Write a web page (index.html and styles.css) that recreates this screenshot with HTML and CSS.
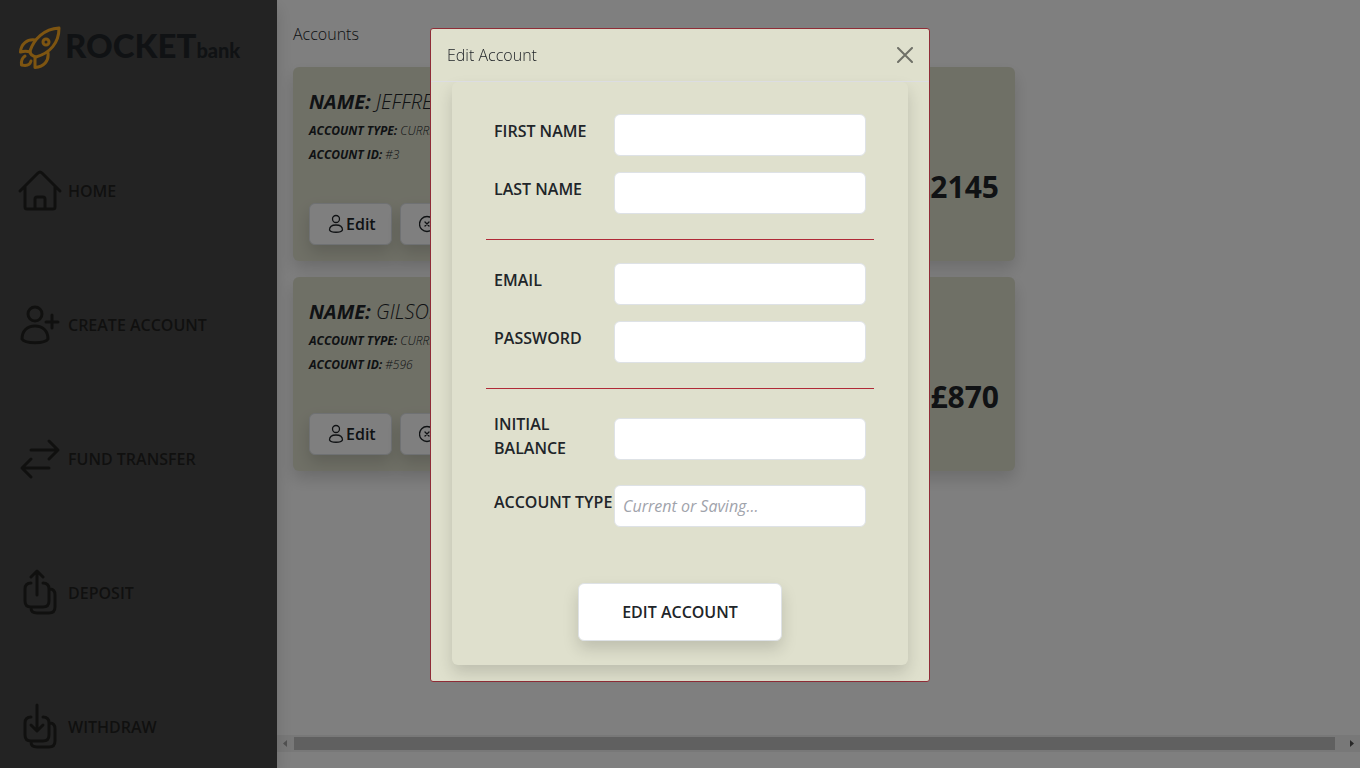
FILE: index.html
```html
<!DOCTYPE html>
<html lang="en">
<head>
<meta charset="utf-8">
<title>Rocket Bank</title>
<link rel="stylesheet" href="styles.css">
</head>
<body>
<div class="app">
  <aside class="sidebar">
    <a class="logo" href="#">
      <svg class="logo-mark" viewBox="0 0 42 43" aria-hidden="true">
        <path d="M17 31C13 30 11 28 11 25C15 13 25 3 40 2C40 17 31 27 17 31Z"/>
        <path d="M16 14C8 13 2 18 1.500 26C5 25 8 25 11 26M29 27C30 35 25 41 16 41.500V31"/>
        <circle cx="27" cy="16" r="3"/>
        <path d="M6 30C3 32 2 35 2.500 39C7 40 11 39 12 35"/>
      </svg>
      <span class="logo-name">ROCKET</span><span class="logo-sub">bank</span>
    </a>
    <nav class="nav">
      <a class="nav-link" href="#">
        <svg class="nav-icon" viewBox="0 0 48 48" aria-hidden="true"><path d="M4 24L22 6Q24 4 26 6L44 24M9 20V40Q9 42 11 42H37Q39 42 39 40V20M19 42V32Q19 30 21 30H27Q29 30 29 32V42"/></svg>
        HOME</a>
      <a class="nav-link" href="#">
        <svg class="nav-icon" viewBox="0 0 48 48" aria-hidden="true"><circle cx="19" cy="13" r="7"/><path d="M6 38C6 30 11 25 19 25S32 30 32 38C29 43 9 43 6 38ZM36 14V27M30 21H42"/></svg>
        CREATE ACCOUNT</a>
      <a class="nav-link" href="#">
        <svg class="nav-icon" viewBox="0 0 48 48" aria-hidden="true"><path d="M15 15H42M33 6L42 15L33 24M33 33H6M15 24L6 33L15 42"/></svg>
        FUND TRANSFER</a>
      <a class="nav-link" href="#">
        <svg class="nav-icon" viewBox="0 0 48 48" aria-hidden="true"><path d="M15 14Q9 14 9 20V32Q9 38 15 38H27Q33 38 33 32V20Q33 14 27 14M21 26V3M15 8L21 2L27 8M34 20Q39 20 39 26V38Q39 44 33 44H21Q15 44 15 39"/></svg>
        DEPOSIT</a>
      <a class="nav-link" href="#">
        <svg class="nav-icon" viewBox="0 0 48 48" aria-hidden="true"><path d="M15 14Q9 14 9 20V32Q9 38 15 38H27Q33 38 33 32V20Q33 14 27 14M21 27V2M15 22L21 28L27 22M34 20Q39 20 39 26V38Q39 44 33 44H21Q15 44 15 39"/></svg>
        WITHDRAW</a>
    </nav>
  </aside>
  <main class="main">
    <h1 class="page-title">Accounts</h1>
    <div class="cards">
      <article class="card">
        <div class="card-info">
          <h2 class="card-name"><b>NAME:</b> JEFFREY</h2>
          <p class="card-line"><b>ACCOUNT TYPE:</b> CURRENT</p>
          <p class="card-line"><b>ACCOUNT ID:</b> #3</p>
          <div class="card-actions">
            <button class="card-button" type="button"><svg class="button-icon" viewBox="0 0 16 20" aria-hidden="true"><circle cx="8" cy="5" r="3.500"/><path d="M1.500 16C1.500 13 4 11 8 11S14.500 13 14.500 16C13 19 3 19 1.500 16Z"/></svg>Edit</button>
            <button class="card-button" type="button"><svg class="button-icon" viewBox="0 0 16 20" aria-hidden="true"><circle cx="8" cy="10" r="7.500"/><path d="M6 8L10 12M10 8L6 12"/></svg>Delete</button>
          </div>
        </div>
        <strong class="balance">£2145</strong>
      </article>
      <article class="card">
        <div class="card-info">
          <h2 class="card-name"><b>NAME:</b> GILSON</h2>
          <p class="card-line"><b>ACCOUNT TYPE:</b> CURRENT</p>
          <p class="card-line"><b>ACCOUNT ID:</b> #596</p>
          <div class="card-actions">
            <button class="card-button" type="button"><svg class="button-icon" viewBox="0 0 16 20" aria-hidden="true"><circle cx="8" cy="5" r="3.500"/><path d="M1.500 16C1.500 13 4 11 8 11S14.500 13 14.500 16C13 19 3 19 1.500 16Z"/></svg>Edit</button>
            <button class="card-button" type="button"><svg class="button-icon" viewBox="0 0 16 20" aria-hidden="true"><circle cx="8" cy="10" r="7.500"/><path d="M6 8L10 12M10 8L6 12"/></svg>Delete</button>
          </div>
        </div>
        <strong class="balance">£870</strong>
      </article>
    </div>
    <div class="scrollbar" aria-hidden="true">
      <svg class="scroll-arrow scroll-arrow-off" viewBox="0 0 17 17"><path d="M10 5V12L6 8.500Z"/></svg>
      <div class="scroll-thumb"></div>
      <svg class="scroll-arrow" viewBox="0 0 17 17"><path d="M7 5V12L11 8.500Z"/></svg>
    </div>
  </main>
</div>
<div class="backdrop">
  <section class="modal" role="dialog" aria-modal="true" aria-labelledby="modal-title">
    <header class="modal-header">
      <h2 class="modal-title" id="modal-title">Edit Account</h2>
      <button class="close" type="button" aria-label="Close"><svg viewBox="0 0 16 16" aria-hidden="true"><path d="M1 1L15 15M15 1L1 15"/></svg></button>
    </header>
    <div class="modal-body">
      <form class="form">
        <div class="group">
          <div class="field"><label for="first">FIRST NAME</label><input id="first" type="text"></div>
          <div class="field"><label for="last">LAST NAME</label><input id="last" type="text"></div>
        </div>
        <hr class="rule">
        <div class="group">
          <div class="field"><label for="email">EMAIL</label><input id="email" type="email"></div>
          <div class="field"><label for="password">PASSWORD</label><input id="password" type="password"></div>
        </div>
        <hr class="rule">
        <div class="group group-wide">
          <div class="field field-tall"><label for="balance">INITIAL BALANCE</label><input id="balance" type="text"></div>
          <div class="field"><label for="type">ACCOUNT TYPE</label><input id="type" type="text" placeholder="Current or Saving..."></div>
        </div>
        <button class="submit" type="submit">EDIT ACCOUNT</button>
      </form>
    </div>
  </section>
</div>
</body>
</html>
```
FILE: styles.css
```css
* { box-sizing: border-box; }
body {
  margin: 0;
  background: #fff;
  color: #212529;
  font: 16px/24px "Open Sans", "Noto Sans", sans-serif;
  overflow: hidden;
}
h1, h2, p { margin: 0; font-weight: 300; }
b { font-weight: 700; }
button, input { font: inherit; color: inherit; }
svg { fill: none; stroke: currentColor; stroke-linecap: round; stroke-linejoin: round; flex: none; }

.nav-link,
.card-button,
.field label,
.submit {
  font-weight: 650;
}

.app { display: flex; height: 100vh; }

.sidebar {
  flex: none;
  width: 277px;
  padding: 26px 16px 0;
  background: #474747;
  box-shadow: 0 8px 16px rgba(0, 0, 0, .15);
  overflow: hidden;
  z-index: 1;
}
.logo {
  display: flex;
  align-items: baseline;
  height: 43px;
  padding-left: 3px;
  color: #212529;
  text-decoration: none;
  font-family: Lato, sans-serif;
  font-weight: 900;
}
.logo-mark { align-self: flex-start; width: 42px; height: 43px; margin-right: 4px; color: #fdab23; stroke-width: 3; }
.logo-name { font-size: 33px; line-height: 38px; }
.logo-sub { font-size: 20px; }
.nav { display: flex; flex-direction: column; gap: 86px; margin-top: 98px; }
.nav-link {
  display: flex;
  align-items: center;
  gap: 4px;
  color: #21211f;
  text-decoration: none;
}
.nav-icon { width: 48px; height: 48px; stroke-width: 3; }

.main {
  flex: 1;
  min-width: 0;
  display: flex;
  flex-direction: column;
  padding: 22px 0 16px;
}
.page-title { padding: 0 16px; font-size: 16px; }
.cards { flex: 1; display: flex; flex-direction: column; gap: 16px; padding: 21px 16px; max-width: 754px; }
.card {
  display: flex;
  justify-content: space-between;
  padding: 20px 16px 16px;
  border-radius: 6px;
  background: #dfe0cd;
  box-shadow: 0 8px 16px rgba(0, 0, 0, .15);
}
.card-name { font-size: 20px; line-height: 30px; font-style: italic; margin-bottom: 2px; }
.card-line { font-size: 12px; font-style: italic; }
.card-actions { display: flex; gap: 8px; margin-top: 36px; }
.card-button {
  display: flex;
  align-items: center;
  gap: 2px;
  height: 42px;
  padding: 0 15px 0 18px;
  border: 1px solid #dee2e6;
  border-radius: 6px;
  background: #fff;
  box-shadow: 0 8px 16px rgba(0, 0, 0, .15);
}
.button-icon { width: 16px; height: 20px; stroke-width: 1.3; }
.balance { align-self: flex-end; padding-bottom: 36px; font-size: 30px; line-height: 44px; }

.scrollbar { display: flex; align-items: center; height: 17px; background: #f1f1f1; }
.scroll-thumb { flex: 1; height: 13px; margin-right: 8px; background: #c1c1c1; }
.scroll-arrow { width: 17px; height: 17px; fill: #505050; stroke: none; }
.scroll-arrow-off { fill: #a3a3a3; }

.backdrop {
  position: fixed;
  inset: 0;
  z-index: 2;
  padding: 28px;
  background: rgba(0, 0, 0, .5);
}
.modal {
  max-width: 500px;
  margin: 0 auto;
  border: 1px solid #8f2c37;
  border-radius: 3px;
  background: #dfe0cd;
}
.modal-header {
  position: relative;
  display: flex;
  align-items: center;
  justify-content: space-between;
  padding: 14px 16px;
  border-bottom: 1px solid #dcdde2;
}
.modal-title { font-size: 16px; }
.close { display: flex; padding: 0; border: 0; background: none; color: #6f7067; }
.close svg { width: 16px; height: 16px; stroke-width: 2; }
.modal-body { padding: 0 21px 16px; }
.form {
  display: flex;
  flex-direction: column;
  padding: 32px 34px 24px;
  border-radius: 6px;
  background: #dfe0cd;
  box-shadow: 0 8px 16px rgba(0, 0, 0, .15);
}
.group { display: flex; flex-direction: column; gap: 16px; padding: 0 8px; }
.group-wide { gap: 25px; }
.field { display: grid; grid-template-columns: 120px 1fr; }
.field label { padding-top: 5px; white-space: nowrap; }
.field-tall label { padding-top: 0; white-space: normal; }
.field input {
  min-width: 0;
  width: 100%;
  height: 42px;
  align-self: end;
  padding: 0 8px;
  border: 1px solid #dee2e6;
  border-radius: 6px;
  background: #fff;
}
.field input::placeholder { color: #9fa3ab; font-style: italic; opacity: 1; }
.rule { width: 100%; height: 1px; margin: 25px 0 23px; border: 0; background: #b02a37; }
.submit {
  align-self: center;
  height: 58px;
  margin-top: 56px;
  padding: 0 43px;
  border: 1px solid #dee2e6;
  border-radius: 6px;
  background: #fff;
  box-shadow: 0 8px 16px rgba(0, 0, 0, .15);
}
```
